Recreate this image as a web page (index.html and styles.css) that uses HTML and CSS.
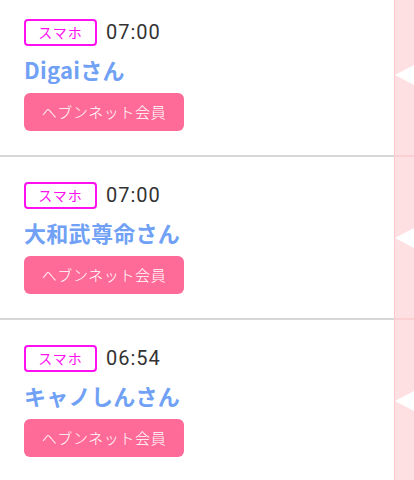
FILE: index.html
```html
<!DOCTYPE html>
<html lang="ja">
<head>
    <meta charset="UTF-8">
    <meta name="viewport" content="width=device-width, initial-scale=1.0">
    <title>アクセス履歴</title>
    <link rel="stylesheet" href="styles.css">
</head>
<body>
    <ul class="visitor-list">
        <li class="visitor">
            <div class="visitor-body">
                <div class="visitor-meta">
                    <span class="device">スマホ</span>
                    <span class="time">07:00</span>
                </div>
                <p class="visitor-name">Digaiさん</p>
                <span class="member">ヘブンネット会員</span>
            </div>
            <div class="visitor-side"><span class="arrow"></span></div>
        </li>
        <li class="visitor">
            <div class="visitor-body">
                <div class="visitor-meta">
                    <span class="device">スマホ</span>
                    <span class="time">07:00</span>
                </div>
                <p class="visitor-name">大和武尊命さん</p>
                <span class="member">ヘブンネット会員</span>
            </div>
            <div class="visitor-side"><span class="arrow"></span></div>
        </li>
        <li class="visitor">
            <div class="visitor-body">
                <div class="visitor-meta">
                    <span class="device">スマホ</span>
                    <span class="time">06:54</span>
                </div>
                <p class="visitor-name">キャノしんさん</p>
                <span class="member">ヘブンネット会員</span>
            </div>
            <div class="visitor-side"><span class="arrow"></span></div>
        </li>
    </ul>
</body>
</html>
```

FILE: styles.css
```css
body {
    margin: 0;
    background: #fff;
    font-family: "Noto Sans CJK JP", "Noto Sans", sans-serif;
    color: #333;
}
.visitor-list {
    list-style: none;
    margin: -6px 0 0 0;
    padding: 0;
}
.visitor {
    display: flex;
    height: 163px;
}
.visitor-body {
    flex: 1;
    padding: 25px 0 0 24px;
    border-bottom: 2px solid #d6d6d6;
    box-sizing: border-box;
}
.visitor-meta {
    display: flex;
    align-items: center;
    gap: 9px;
}
.device {
    display: inline-block;
    box-sizing: border-box;
    width: 73px;
    height: 27px;
    line-height: 23px;
    border: 2px solid #ff10f0;
    border-radius: 4px;
    color: #ff10f0;
    font-size: 14px;
    text-align: center;
    letter-spacing: 1px;
}
.time {
    font-family: Roboto, "Noto Sans CJK JP", sans-serif;
    font-size: 20px;
    line-height: 27px;
    letter-spacing: 1px;
    color: #333;
}
.visitor-name {
    margin: 7px 0 8px 0;
    font-size: 22px;
    line-height: 32px;
    font-weight: bold;
    letter-spacing: 0.3px;
    color: #70a1f5;
}
.member {
    display: block;
    width: 160px;
    height: 38px;
    line-height: 38px;
    background: #ff6b98;
    border-radius: 6px;
    color: #fff;
    font-size: 15px;
    font-weight: 300;
    text-align: center;
    letter-spacing: 0.6px;
}
.visitor-side {
    width: 20px;
    display: flex;
    align-items: center;
    background: #ffe0e2;
    border-left: 1px solid #fcc6ca;
    border-bottom: 2px solid #fcd0d3;
    box-sizing: border-box;
}
.arrow {
    width: 0;
    height: 0;
    border-top: 10px solid transparent;
    border-bottom: 10px solid transparent;
    border-right: 19px solid #fff;
}
```
